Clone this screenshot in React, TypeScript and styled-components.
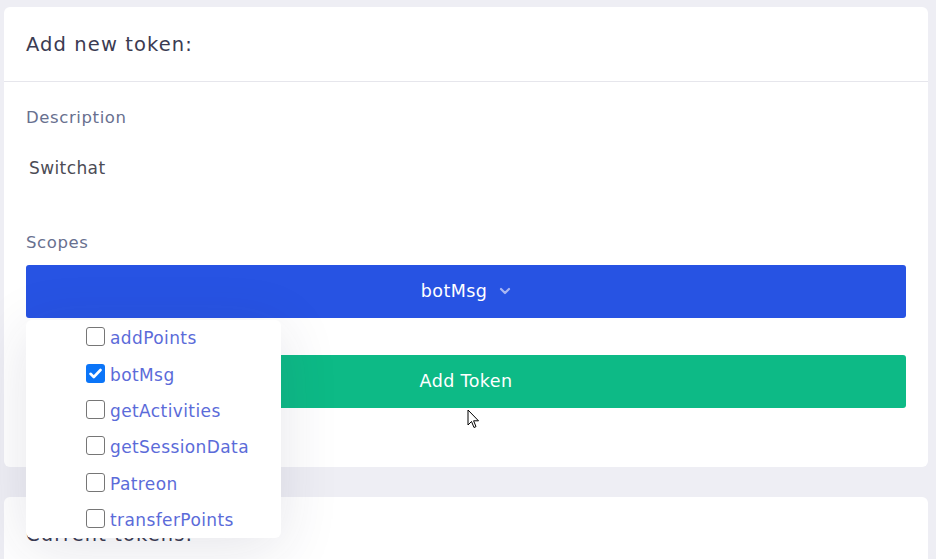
import React from "react";
import styled, { createGlobalStyle } from "styled-components";

const Global = createGlobalStyle`
  html, body { margin: 0; padding: 0; background: #eeeef4; }
  body { font-family: "DejaVu Sans", "Noto Sans", sans-serif; overflow: hidden; }
  * { box-sizing: border-box; }
`;

const Page = styled.div`
  padding: 7px 8px 0 4px;
  height: 559px;
  display: flex;
  flex-direction: column;
  gap: 30px;
  position: relative;
`;

const Card = styled.section`
  background: #ffffff;
  border-radius: 6px;
  flex-shrink: 0;
`;

const CardHeader = styled.header<{ $line?: boolean }>`
  height: 75px;
  padding: 0 22px;
  display: flex;
  align-items: center;
  border-bottom: ${(p) => (p.$line ? "1px solid #e6e6ec" : "none")};
  font-size: 19.5px;
  color: #3b3b52;
  letter-spacing: 1.1px;
`;

const CardBody = styled.div`
  padding: 25px 22px 59px 22px;
  display: flex;
  flex-direction: column;
`;

const Label = styled.div`
  font-size: 16.5px;
  color: #68708f;
  line-height: 22px;
  letter-spacing: 0.6px;
`;

const Value = styled.div`
  font-size: 17px;
  color: #4c4c55;
  padding: 27px 0 0 3px;
  line-height: 24px;
  height: 103px;
  letter-spacing: 0.4px;
`;

const Dropdown = styled.div`
  position: relative;
  margin-top: 11px;
`;

const SelectButton = styled.button`
  width: 100%;
  height: 53px;
  border: none;
  border-radius: 3px;
  background: #2753e3;
  color: #ffffff;
  font-family: inherit;
  font-size: 17.5px;
  letter-spacing: 0.4px;
  display: flex;
  align-items: center;
  justify-content: center;
  gap: 12px;
  padding: 0 0 2px 0;
`;

const Menu = styled.ul`
  position: absolute;
  left: 0;
  top: 55px;
  width: 255px;
  margin: 0;
  padding: 0;
  list-style: none;
  background: #ffffff;
  border-radius: 6px;
  box-shadow: 0 10px 60px rgba(40, 40, 80, 0.12);
  z-index: 2;
`;

const Item = styled.li`
  height: 36.4px;
  display: flex;
  align-items: center;
  padding-left: 60px;
  gap: 5px;
  font-size: 17px;
  color: #5b6bd9;
  letter-spacing: 0.4px;
`;

const Box = styled.span<{ $checked?: boolean }>`
  width: 19px;
  height: 19px;
  border-radius: 3px;
  border: ${(p) => (p.$checked ? "none" : "1.3px solid #767676")};
  background: ${(p) => (p.$checked ? "#0b75f8" : "#ffffff")};
  display: flex;
  align-items: center;
  justify-content: center;
  margin-top: -3px;
`;

const AddButton = styled.button`
  margin-top: 37px;
  width: 100%;
  height: 53px;
  border: none;
  border-radius: 3px;
  background: #0dba86;
  color: #ffffff;
  font-family: inherit;
  font-size: 17.5px;
  letter-spacing: 0.4px;
  padding: 0 0 2px 0;
`;

const Cursor = styled.svg`
  position: absolute;
  left: 467px;
  top: 409px;
  z-index: 3;
`;

const scopes = ["addPoints", "botMsg", "getActivities", "getSessionData", "Patreon", "transferPoints"];

export default function App() {
  return (
    <>
      <Global />
      <Page>
        <Card>
          <CardHeader $line>Add new token:</CardHeader>
          <CardBody>
            <Label>Description</Label>
            <Value>Switchat</Value>
            <Label>Scopes</Label>
            <Dropdown>
              <SelectButton>
                botMsg
                <svg width="12" height="8" viewBox="0 0 12 8">
                  <path d="M2 2 L6 6 L10 2" fill="none" stroke="#a9b6f2" strokeWidth="2.2" strokeLinecap="round" strokeLinejoin="round" />
                </svg>
              </SelectButton>
              <Menu>
                {scopes.map((s) => (
                  <Item key={s}>
                    <Box $checked={s === "botMsg"}>
                      {s === "botMsg" && (
                        <svg width="13" height="11" viewBox="0 0 13 11">
                          <path d="M1.5 5.8 L4.8 9 L11.5 2" fill="none" stroke="#fff" strokeWidth="2.6" strokeLinecap="round" strokeLinejoin="round" />
                        </svg>
                      )}
                    </Box>
                    {s}
                  </Item>
                ))}
              </Menu>
            </Dropdown>
            <AddButton>Add Token</AddButton>
          </CardBody>
        </Card>
        <Card>
          <CardHeader>Current tokens:</CardHeader>
        </Card>
        <Cursor width="14" height="21" viewBox="0 0 14 21">
          <path d="M1 1 L1 16 L4.5 12.5 L7 18.5 L9 17.6 L6.6 11.8 L11.5 11.8 Z" fill="#fff" stroke="#000" strokeWidth="1" strokeLinejoin="miter" />
        </Cursor>
      </Page>
    </>
  );
}
